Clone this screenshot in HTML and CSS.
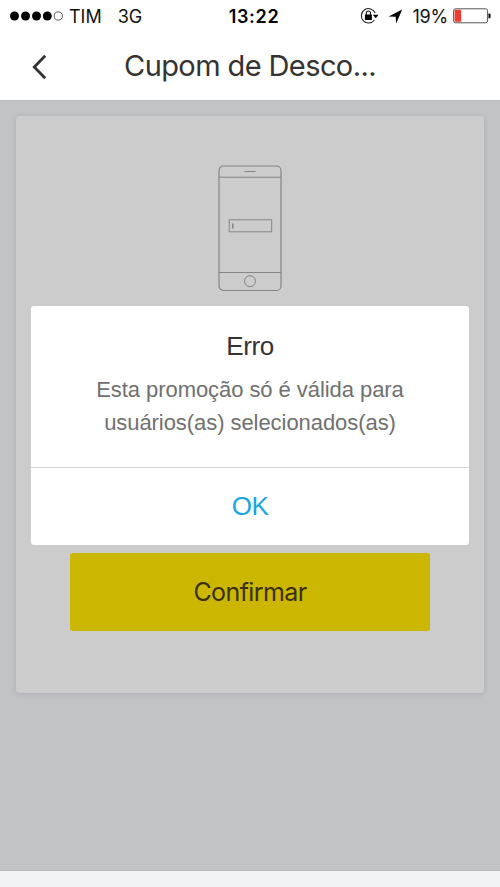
FILE: index.html
```
<!DOCTYPE html>
<html lang="pt-BR">
<head>
<meta charset="utf-8">
<meta name="viewport" content="width=device-width, initial-scale=1">
<title>Cupom de Desconto</title>
<link rel="stylesheet" href="styles.css">
</head>
<body>
<div class="app">
  <header class="header">
    <div class="status">
      <div class="status-left">
        <svg class="signal" width="54" height="12" viewBox="0 0 54 12"><circle cx="4.5" cy="6" r="4.5"/><circle cx="15.5" cy="6" r="4.5"/><circle cx="26.5" cy="6" r="4.5"/><circle cx="37.3" cy="6" r="4.5"/><circle cx="48.3" cy="6" r="4.1" fill="none" stroke="#333" stroke-width=".8"/></svg>
        <span class="carrier">TIM</span>
        <span class="network">3G</span>
      </div>
      <span class="clock">13:22</span>
      <div class="status-right">
        <svg class="lock" width="19" height="18" viewBox="0 0 19 18"><path d="M15.2 6A7.2 7.2 0 1 0 14.4 13" fill="none" stroke="#222" stroke-width="1.1"/><path d="M12.8 7.8h5.8l-2.9 3.4z"/><rect x="4.9" y="7.5" width="7" height="5.4" rx=".5"/><path d="M6.3 8V6.1a2.1 2.1 0 0 1 4.2 0V8" fill="none" stroke="#111" stroke-width="1.1"/></svg>
        <svg class="arrow" width="15" height="15" viewBox="0 0 15 15"><path d="M14.2.6 8.2 14.4 7.6 7.8.6 7.4z"/></svg>
        <span class="percent">19%</span>
        <svg class="battery" width="38" height="16" viewBox="0 0 38 16"><rect x=".6" y=".8" width="34" height="14" rx="2" fill="#fff" stroke="#555" stroke-width="1"/><rect x="1.6" y="1.8" width="6.5" height="12" rx=".6" fill="#f43b2f"/><path d="M35.5 5.4h1q1 0 1 1v2.8q0 1-1 1h-1z"/></svg>
      </div>
    </div>
    <div class="nav">
      <svg class="back" width="16" height="26" viewBox="0 0 16 26"><path d="M13.2 1.8 2.3 13l10.9 11.2" fill="none" stroke="#333" stroke-width="2.8"/></svg>
      <h1 class="title">Cupom de Desco...</h1>
    </div>
  </header>
  <main class="page">
    <section class="card">
      <svg class="phone" width="64" height="127" viewBox="0 0 64 127" fill="none" stroke="#858585" stroke-width="1"><rect x="1" y="1" width="62" height="124.5" rx="4.5" stroke-width="1.2"/><path d="M1 12.2h62M1 107.5h62M26.5 6.5h11"/><rect x="11.2" y="54.8" width="42.5" height="12"/><path d="M14.8 58.5v5" stroke-width="1.6"/><circle cx="32" cy="116.2" r="5.5"/></svg>
      <button class="confirm">Confirmar</button>
    </section>
    <div class="dialog" role="alertdialog">
      <div class="dialog-body">
        <h2 class="dialog-title">Erro</h2>
        <p class="message">Esta promoção só é válida para<br>usuários(as) selecionados(as)</p>
      </div>
      <button class="ok">OK</button>
    </div>
  </main>
  <footer class="bottom"></footer>
</div>
</body>
</html>
```
FILE: styles.css
```
* { box-sizing: border-box; }
body { margin: 0; background: #f2f3f5; font-family: Inter, sans-serif; }
h1, h2, p { margin: 0; font-weight: 400; }
button { border: 0; padding: 0; margin: 0; }
svg { display: block; flex: none; }
.app { width: 500px; height: 887px; display: flex; flex-direction: column; overflow: hidden; }
.header { height: 100px; background: #fff; }
.status { height: 32px; display: grid; grid-template-columns: 1fr auto 1fr; align-items: center; padding: 0 9px 0 10px; font-size: 18px; line-height: 30px; color: #111; white-space: nowrap; }
.status span { padding-top: 1px; }
.status-left, .status-right { display: flex; align-items: center; }
.status-right { justify-content: flex-end; }
.carrier { margin-left: 5px; }
.network { margin-left: 16px; }
.status .clock { font-weight: 600; color: #000; padding-left: 7px; letter-spacing: .7px; }
.arrow { margin-left: 9px; }
.percent { margin-left: 9px; letter-spacing: -.2px; }
.battery { margin-left: 5px; }
.nav { height: 67px; display: grid; grid-template-columns: 60px 380px 60px; align-items: center; }
.back { margin-left: 32px; margin-top: 3px; }
.title { text-align: center; font-size: 29px; line-height: 40px; letter-spacing: -.6px; color: #333; padding-top: 1px; }
.page { height: 771px; position: relative; background: #c2c3c5; padding: 15px 16px 0; border-top: 1px solid #bcbdbe; border-bottom: 1px solid #b8b9bb; }
.card { height: 577px; border-radius: 4px; background: #ccc; box-shadow: 0 1px 5px rgba(100, 100, 110, .22); display: flex; flex-direction: column; align-items: center; padding: 49px 0 62px; }
.confirm { margin-top: auto; width: 360px; height: 78px; border-radius: 3px; background: #cbb702; color: #3a300b; font: 400 25px/78px Inter, sans-serif; letter-spacing: -.6px; }
.dialog { position: absolute; left: 31px; top: 205px; width: 438px; height: 239px; border-radius: 3px; background: #fff; text-align: center; font-family: "Liberation Sans", Arial, sans-serif; }
.dialog-body { height: 162px; padding-top: 22px; border-bottom: 1px solid #d8d8d8; }
.dialog-title { font-size: 26px; line-height: 36px; letter-spacing: -.4px; color: #333; }
.message { margin-top: 9px; font-size: 22px; line-height: 33px; letter-spacing: -.06px; color: #707070; }
.ok { width: 100%; height: 77px; background: none; color: #1aa6df; font: 400 26px/77px "Liberation Sans", Arial, sans-serif; letter-spacing: -.5px; }
.bottom { height: 16px; background: #f2f3f5; }
```
